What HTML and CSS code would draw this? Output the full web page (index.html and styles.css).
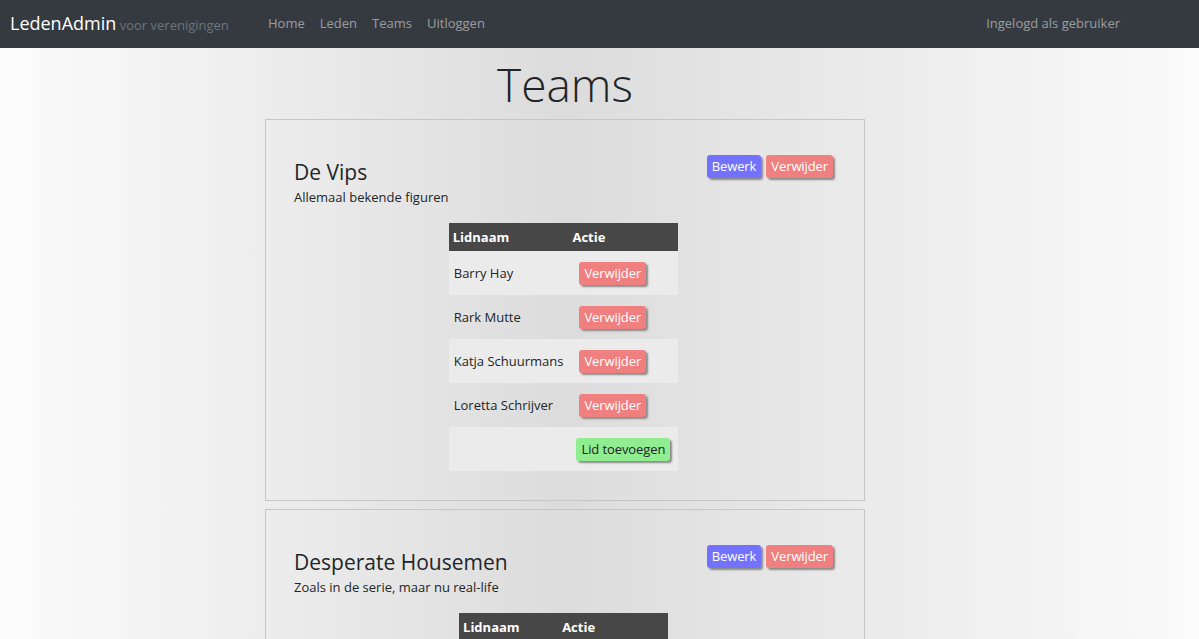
FILE: index.html
```html
<!DOCTYPE html>
<html lang="nl">
<head>
<meta charset="utf-8">
<title>Teams</title>
<link rel="stylesheet" href="styles.css">
</head>
<body>
<nav class="navbar">
  <div class="brand"><span class="brand-name">LedenAdmin</span> <span class="brand-sub">voor verenigingen</span></div>
  <ul class="nav-links">
    <li><a href="#">Home</a></li>
    <li><a href="#">Leden</a></li>
    <li><a href="#">Teams</a></li>
    <li><a href="#">Uitloggen</a></li>
  </ul>
  <div class="nav-user">Ingelogd als gebruiker</div>
</nav>
<main class="main">
  <h1 class="page-title">Teams</h1>
  <section class="card">
    <div class="card-head">
      <div>
        <h2 class="team-name">De Vips</h2>
        <p class="team-desc">Allemaal bekende figuren</p>
      </div>
      <div class="card-actions">
        <button class="btn btn-edit">Bewerk</button>
        <button class="btn btn-del">Verwijder</button>
      </div>
    </div>
    <table class="members">
      <thead><tr><th class="col-name">Lidnaam</th><th class="col-act">Actie</th></tr></thead>
      <tbody>
        <tr><td class="col-name">Barry Hay</td><td class="col-act"><button class="btn btn-del btn-row">Verwijder</button></td></tr>
        <tr><td class="col-name">Rark Mutte</td><td class="col-act"><button class="btn btn-del btn-row">Verwijder</button></td></tr>
        <tr><td class="col-name">Katja Schuurmans</td><td class="col-act"><button class="btn btn-del btn-row">Verwijder</button></td></tr>
        <tr><td class="col-name">Loretta Schrijver</td><td class="col-act"><button class="btn btn-del btn-row">Verwijder</button></td></tr>
        <tr><td class="col-name"></td><td class="col-act"><button class="btn btn-add">Lid toevoegen</button></td></tr>
      </tbody>
    </table>
  </section>
  <section class="card">
    <div class="card-head">
      <div>
        <h2 class="team-name">Desperate Housemen</h2>
        <p class="team-desc">Zoals in de serie, maar nu real-life</p>
      </div>
      <div class="card-actions">
        <button class="btn btn-edit">Bewerk</button>
        <button class="btn btn-del">Verwijder</button>
      </div>
    </div>
    <table class="members">
      <thead><tr><th class="col-name">Lidnaam</th><th class="col-act">Actie</th></tr></thead>
      <tbody>
        <tr><td class="col-name">Marco Borsato</td><td class="col-act"><button class="btn btn-del btn-row">Verwijder</button></td></tr>
        <tr><td class="col-name">Frans Bauer</td><td class="col-act"><button class="btn btn-del btn-row">Verwijder</button></td></tr>
        <tr><td class="col-name"></td><td class="col-act"><button class="btn btn-add">Lid toevoegen</button></td></tr>
      </tbody>
    </table>
  </section>
</main>
</body>
</html>
```
FILE: styles.css
```css
* { box-sizing: border-box; }
html, body { margin: 0; padding: 0; }
body {
  font-family: "Open Sans", "Noto Sans", sans-serif;
  font-size: 13px;
  color: #212529;
  background: linear-gradient(to right, #fcfcfc 0%, #dcdcdc 47%, #fbfbfb 100%);
  min-height: 100vh;
}
.navbar {
  height: 48px;
  background: #343a40;
  display: flex;
  align-items: center;
  padding: 0 10px 2px;
}
.brand { white-space: nowrap; width: 258px; }
.brand-name { color: #fff; font-size: 18px; }
.brand-sub { color: #6c757d; font-size: 13px; }
.nav-links {
  list-style: none;
  margin: 0;
  padding: 0;
  display: flex;
  flex: 1;
}
.nav-links a {
  color: rgba(255,255,255,0.5);
  text-decoration: none;
  font-size: 13px;
  padding: 0 7.5px;
  display: block;
}
.nav-links li:first-child a { padding-left: 0; }
.nav-user {
  color: rgba(255,255,255,0.5);
  font-size: 13px;
  margin-right: 69px;
}
.main {
  display: flex;
  flex-direction: column;
  align-items: center;
  padding-right: 69px;
  padding-bottom: 40px;
}
.page-title {
  font-weight: 300;
  font-size: 46px;
  line-height: 70px;
  margin: 1px 0 0 0;
}
.card {
  width: 600px;
  border: 1px solid #c6c6c6;
  padding: 35px 31px 29px 28px;
  margin-bottom: 8px;
}
.card-head {
  display: flex;
  justify-content: space-between;
  align-items: flex-start;
}
.team-name {
  font-weight: 400;
  font-size: 21px;
  line-height: 32px;
  margin: 0;
  padding-top: 1px;
}
.team-desc {
  margin: -1px 0 0;
  line-height: 20px;
}
.card-actions { display: flex; gap: 5px; }
.btn {
  font-family: inherit;
  font-size: 13px;
  letter-spacing: -0.1px;
  height: 23px;
  line-height: 23px;
  padding: 0 5px;
  border: none;
  border-radius: 3px;
  color: #fff;
  box-shadow: 2px 2px 2px #8a8a8a;
  cursor: pointer;
}
.btn-edit { background: #7272ff; }
.btn-del { background: #f08080; }
.btn-add { background: #90ee90; color: #212529; }
.members {
  margin: 16px auto 0;
  border-collapse: collapse;
}
.members th {
  background: #474747;
  color: #fff;
  font-weight: 700;
  text-align: left;
  height: 28px;
  padding: 0 4px;
}
.members td {
  height: 44px;
  padding: 0 5px;
  white-space: nowrap;
}
.members tbody tr:nth-child(odd) td { background: #ebebeb; }
.members td.col-act { padding: 0 8px 0 8px; }
.members th.col-act { padding-left: 4px; }
.btn-row { margin-left: 3px; }
```
